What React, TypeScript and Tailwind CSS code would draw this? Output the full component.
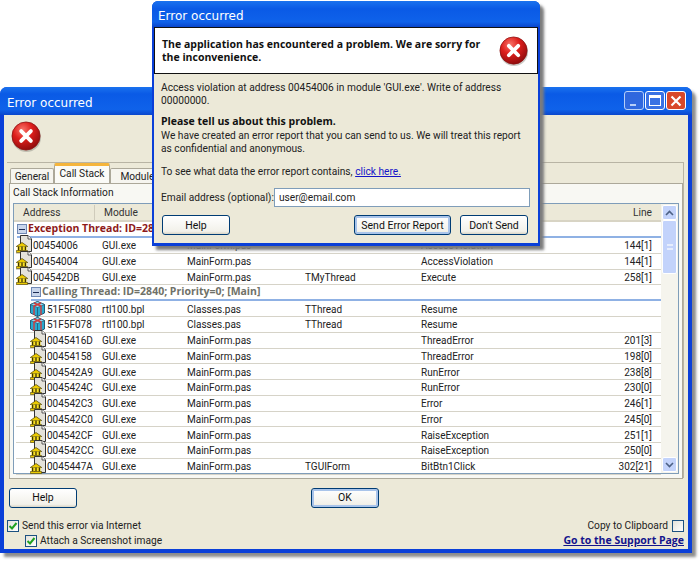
import React from "react";

const FONT = "font-['Roboto','Noto_Sans',sans-serif]";
const BOLD = "font-['Open_Sans',sans-serif] font-bold text-[10.5px]";
const TITLE = "text-[12px] text-white font-['DejaVu_Sans',sans-serif]";

function ErrorIcon({ className }: { className: string }) {
  return (
    <svg viewBox="0 0 32 32" className={className}>
      <defs>
        <radialGradient id="errRed" cx="38%" cy="28%" r="75%">
          <stop offset="0%" stopColor="#f8746a" />
          <stop offset="45%" stopColor="#de1f1c" />
          <stop offset="100%" stopColor="#8e0b0d" />
        </radialGradient>
      </defs>
      <circle cx="16" cy="17" r="15" fill="#8a8a80" opacity="0.45" />
      <circle cx="15.5" cy="15.5" r="14.5" fill="url(#errRed)" stroke="#8b1212" strokeWidth="0.8" />
      <path d="M10.5 10.5 L20.5 20.5 M20.5 10.5 L10.5 20.5" stroke="#fff" strokeWidth="4" strokeLinecap="round" />
    </svg>
  );
}

function UnitIcon() {
  return (
    <svg viewBox="0 0 17 18" className="w-[17px] h-[18px] shrink-0 -mt-[3px]">
      <path d="M4.5 .5 H12 L15.5 4 V16.5 H4.5 Z" fill="#e4e2da" stroke="#333" strokeWidth="1" />
      <path d="M12 .5 V4 H15.5" fill="#fff" stroke="#333" strokeWidth="0.8" />
      <path d="M.3 11.5 L6 7.5 L11.7 11.5 Z" fill="#eccb00" stroke="#4a3d00" strokeWidth="0.7" />
      <path d="M1.5 11.5 H10.5 V15.5 H1.5 Z" fill="#f8e020" />
      <path d="M2.6 11.5 V15.5 M6 11.5 V15.5 M9.4 11.5 V15.5" stroke="#3d3200" strokeWidth="1.3" />
      <path d="M.4 15.5 H11.6 V17.5 H.4 Z" fill="#eccb00" stroke="#4a3d00" strokeWidth="0.6" />
    </svg>
  );
}

function PackageIcon() {
  return (
    <svg viewBox="0 0 15 16" className="w-[15px] h-[16px] shrink-0">
      <path d="M7.5 .5 L14.5 3.5 V12 L7.5 15.5 L.5 12 V3.5 Z" fill="#27a9cf" stroke="#1b4e68" strokeWidth="0.9" />
      <path d="M.5 3.5 L7.5 6.5 L14.5 3.5 L7.5 .5 Z" fill="#8fdcf2" stroke="#1b4e68" strokeWidth="0.6" />
      <path d="M7.5 6.5 V15.5" stroke="#1b4e68" strokeWidth="0.7" />
      <path d="M4 2 L11 5 V14" fill="none" stroke="#d23a3a" strokeWidth="1.4" />
      <path d="M11 2 L4 5 V14" fill="none" stroke="#d23a3a" strokeWidth="1.4" />
    </svg>
  );
}

function XpButton({ label, className, focus }: { label: string; className: string; focus?: boolean }) {
  return (
    <div
      className={`${className} h-[20px] flex items-center justify-center rounded-[3px] border border-[#003c74] bg-[linear-gradient(#ffffff,#f2f1ea_85%,#d9d5c6)] text-[10.5px] text-[#111] ${focus ? "shadow-[inset_0_0_0_2px_#a9c4ea]" : ""}`}
    >
      {label}
    </div>
  );
}

function WinButton({ children, className }: { children: React.ReactNode; className: string }) {
  return (
    <div className={`w-[20px] h-[19px] rounded-[3px] border border-white flex items-center justify-center ${className}`}>
      {children}
    </div>
  );
}

function CheckBox({ checked }: { checked?: boolean }) {
  return (
    <div className="w-[12px] h-[12px] shrink-0 border border-[#1c5180] bg-[linear-gradient(135deg,#e4e2da,#ffffff)] flex items-center justify-center">
      {checked && (
        <svg viewBox="0 0 10 10" className="w-[10px] h-[10px]">
          <path d="M1.5 5 L4 7.5 L8.5 2" fill="none" stroke="#21a121" strokeWidth="2" />
        </svg>
      )}
    </div>
  );
}

type Row = { addr: string; mod: string; unit: string; cls: string; method: string; line: string; pkg?: boolean };

const exceptionRows: Row[] = [
  { addr: "00454006", mod: "GUI.exe", unit: "MainForm.pas", cls: "", method: "AccessViolation", line: "144[1]" },
  { addr: "00454004", mod: "GUI.exe", unit: "MainForm.pas", cls: "", method: "AccessViolation", line: "144[1]" },
  { addr: "004542DB", mod: "GUI.exe", unit: "MainForm.pas", cls: "TMyThread", method: "Execute", line: "258[1]" },
];

const callingRows: Row[] = [
  { addr: "51F5F080", mod: "rtl100.bpl", unit: "Classes.pas", cls: "TThread", method: "Resume", line: "", pkg: true },
  { addr: "51F5F078", mod: "rtl100.bpl", unit: "Classes.pas", cls: "TThread", method: "Resume", line: "", pkg: true },
  { addr: "0045416D", mod: "GUI.exe", unit: "MainForm.pas", cls: "", method: "ThreadError", line: "201[3]" },
  { addr: "00454158", mod: "GUI.exe", unit: "MainForm.pas", cls: "", method: "ThreadError", line: "198[0]" },
  { addr: "004542A9", mod: "GUI.exe", unit: "MainForm.pas", cls: "", method: "RunError", line: "238[8]" },
  { addr: "0045424C", mod: "GUI.exe", unit: "MainForm.pas", cls: "", method: "RunError", line: "230[0]" },
  { addr: "004542C3", mod: "GUI.exe", unit: "MainForm.pas", cls: "", method: "Error", line: "246[1]" },
  { addr: "004542C0", mod: "GUI.exe", unit: "MainForm.pas", cls: "", method: "Error", line: "245[0]" },
  { addr: "004542CF", mod: "GUI.exe", unit: "MainForm.pas", cls: "", method: "RaiseException", line: "251[1]" },
  { addr: "004542CC", mod: "GUI.exe", unit: "MainForm.pas", cls: "", method: "RaiseException", line: "250[0]" },
  { addr: "0045447A", mod: "GUI.exe", unit: "MainForm.pas", cls: "TGUIForm", method: "BitBtn1Click", line: "302[21]" },
];

function StackRow({ row, nested }: { row: Row; nested?: boolean }) {
  return (
    <div className="flex items-center h-[15.75px] pt-[1px] border-b border-[#d6d3c8] text-[10px] text-[#222] whitespace-nowrap">
      <div className={`flex items-center w-[86px] ${nested ? "pl-[14px]" : ""}`}>
        {row.pkg ? (
          <div className="flex items-center gap-[2px]">
            <PackageIcon />
            <span>{row.addr}</span>
          </div>
        ) : (
          <div className="flex items-center">
            <UnitIcon />
            <span>{row.addr}</span>
          </div>
        )}
      </div>
      <div className="w-[85px]">{row.mod}</div>
      <div className="w-[118px]">{row.unit}</div>
      <div className="w-[116px]">{row.cls}</div>
      <div className="flex-1">{row.method}</div>
      <div className="pr-[9px]">{row.line}</div>
    </div>
  );
}

function ThreadHeader({ label, color, nested }: { label: string; color: string; nested?: boolean }) {
  return (
    <div className={`flex items-center h-[16px] gap-[1px] border-b-2 border-[#8fb1e4] whitespace-nowrap ${nested ? "ml-[15px]" : "ml-[1px]"}`}>
      <div className="w-[10px] h-[10px] bg-[#c9d6ec] border border-[#6f88b4] flex items-center justify-center">
        <div className="w-[6px] h-[1px] bg-[#1c2c55]" />
      </div>
      <span className={`${BOLD} ${color}`}>{label}</span>
    </div>
  );
}

function CallStackList() {
  return (
    <div className="mx-[3px] h-[271px] border border-[#7f9db9] bg-white flex">
      <div className="flex-1 min-w-0 flex flex-col">
        <div className="h-[18px] flex items-center bg-[#ece9d8] text-[10.2px] text-[#333] border-b-2 border-[#d8d4c4] shrink-0 pt-[1px]">
          <div className="w-[81px] pl-[9px] border-r border-[#cfcbbb]">Address</div>
          <div className="w-[85px] pl-[9px]">Module</div>
          <div className="flex-1" />
          <div className="pr-[9px]">Line</div>
        </div>
        <div className="h-[8px]" />
        <div className="pl-[2px]">
          <ThreadHeader label="Exception Thread: ID=2840; Priority=0; [Main]" color="text-[#8e1a1a]" />
          {exceptionRows.map((r) => (
            <StackRow key={r.addr} row={r} />
          ))}
          <ThreadHeader label="Calling Thread: ID=2840; Priority=0; [Main]" color="text-[#6f7168]" nested />
          {callingRows.map((r) => (
            <StackRow key={r.addr} row={r} nested />
          ))}
        </div>
      </div>
      <div className="w-[17px] shrink-0 bg-[#f5f4ed] flex flex-col p-[1px]">
        <div className="h-[15px] rounded-[2px] bg-[#c3d3fb] border border-white flex items-center justify-center">
          <svg viewBox="0 0 9 6" className="w-[9px] h-[6px]">
            <path d="M1 5 L4.5 1.5 L8 5" fill="none" stroke="#4d6185" strokeWidth="1.6" />
          </svg>
        </div>
        <div className="h-[54px] rounded-[2px] bg-[#c3d3fb] border border-white flex items-center justify-center">
          <div className="w-[6px] h-[6px] border-y-2 border-[#e6edfd]" />
        </div>
        <div className="flex-1" />
        <div className="h-[15px] rounded-[2px] bg-[#c3d3fb] border border-white flex items-center justify-center">
          <svg viewBox="0 0 9 6" className="w-[9px] h-[6px]">
            <path d="M1 1 L4.5 4.5 L8 1" fill="none" stroke="#4d6185" strokeWidth="1.6" />
          </svg>
        </div>
      </div>
    </div>
  );
}

function MainWindow() {
  return (
    <div className="absolute left-0 top-[87px] w-[692px] h-[466px] rounded-t-[7px] bg-[#0a3fd8] shadow-[4px_4px_3px_#8c8c8c] flex flex-col">
      <div className="h-[28px] shrink-0 rounded-t-[7px] bg-[linear-gradient(#1a72ee,#0a5ae6_25%,#0f62ea_80%,#0a46cc)] flex items-center justify-between pl-[7px] pr-[6px]">
        <span className={`${TITLE} mt-[4px]`}>Error occurred</span>
        <div className="flex items-center gap-[1px] -mt-[1px]">
          <WinButton className="bg-[#3f6ddb] opacity-70">
            <div className="w-[6px] h-[2px] bg-white mt-[9px] mr-[3px]" />
          </WinButton>
          <WinButton className="bg-[#3a72e4]">
            <div className="w-[12px] h-[11px] border border-white border-t-[3px]" />
          </WinButton>
          <WinButton className="bg-[#d8482a]">
            <svg viewBox="0 0 12 12" className="w-[12px] h-[12px]">
              <path d="M1.5 1.5 L10.5 10.5 M10.5 1.5 L1.5 10.5" stroke="#fff" strokeWidth="2.2" />
            </svg>
          </WinButton>
        </div>
      </div>
      <div className="flex-1 mx-[4px] mb-[4px] bg-[#ece9d8] flex flex-col pt-[6px] pl-[3px] pr-[4px] min-h-0">
        <ErrorIcon className="w-[31px] h-[31px] ml-[4px] shrink-0" />
        <div className="mt-[10px] h-[316px] border-t border-r border-[#b8b4a4] relative shrink-0">
          <div className="flex items-end h-[20px] pl-[3px] text-[10.2px] text-[#222]">
            <div className="w-[44px] h-[15px] bg-[#f6f5ef] border border-[#aca899] border-b-0 rounded-t-[2px] text-center">General</div>
            <div className="w-[56px] h-[20px] bg-[#fbfbf7] border-x border-[#aca899] border-t-[3px] border-t-[#f5b53c] rounded-t-[2px] text-center">Call Stack</div>
            <div className="w-[60px] h-[15px] bg-[#f6f5ef] border border-[#aca899] border-b-0 rounded-t-[2px] text-center">Modules</div>
          </div>
          <div className="h-[296px] ml-[2px] border border-[#aca899] bg-[#f8f8f3]">
            <div className="text-[10.2px] text-[#222] leading-[13px] pt-[2px] pl-[3px] h-[19px]">Call Stack Information</div>
            <CallStackList />
          </div>
        </div>
        <div className="mt-[10px] flex items-center shrink-0 h-[20px]">
          <XpButton label="Help" className="w-[68px] ml-[2px]" />
          <XpButton label="OK" className="w-[68px] ml-[234px]" focus />
        </div>
        <div className="mt-[12px] flex justify-between shrink-0 text-[10.2px] text-[#222]">
          <div className="flex flex-col gap-[3px]">
            <div className="flex items-center gap-[3px] leading-[12px]">
              <CheckBox checked />
              <span>Send this error via Internet</span>
            </div>
            <div className="flex items-center gap-[3px] ml-[18px] leading-[12px]">
              <CheckBox checked />
              <span>Attach a Screenshot image</span>
            </div>
          </div>
          <div className="flex flex-col items-end gap-[2px] leading-[12px]">
            <div className="flex items-center gap-[4px]">
              <span>Copy to Clipboard</span>
              <CheckBox />
            </div>
            <a className={`${BOLD} text-[#14148c] underline`}>Go to the Support Page</a>
          </div>
        </div>
      </div>
    </div>
  );
}

function ReportDialog() {
  return (
    <div className="absolute left-[152px] top-[1px] w-[388px] h-[245px] rounded-t-[6px] bg-[#0a3fd8] shadow-[4px_4px_3px_#7c7c7c] flex flex-col">
      <div className="h-[26px] shrink-0 rounded-t-[6px] bg-[linear-gradient(#1a72ee,#0a5ae6_30%,#0f62ea_80%,#0a46cc)] flex items-center pl-[6px]">
        <span className={`${TITLE} mt-[3px]`}>Error occurred</span>
      </div>
      <div className="flex-1 mx-[2px] mb-[3px] bg-[#ece9d8] flex flex-col text-[10.2px] leading-[13px] text-[#222] min-h-0">
        <div className="h-[47px] shrink-0 bg-white border border-[#111] flex items-center justify-between pl-[7px] pr-[8px]">
          <p className={`w-[330px] text-[#111] leading-[12.5px] ${BOLD}`}>
            The application has encountered a problem. We are sorry for the inconvenience.
          </p>
          <ErrorIcon className="w-[30px] h-[30px] shrink-0" />
        </div>
        <div className="px-[7px] flex flex-col">
          <p className="mt-[7px] w-[345px]">Access violation at address 00454006 in module 'GUI.exe'. Write of address 00000000.</p>
          <p className={`mt-[8px] text-[#111] ${BOLD}`}>Please tell us about this problem.</p>
          <p className="mt-[1px]">We have created an error report that you can send to us. We will treat this report as confidential and anonymous.</p>
          <p className="mt-[10px]">
            To see what data the error report contains, <a className="text-[#1414c8] underline">click here.</a>
          </p>
          <div className="mt-[10px] flex items-center justify-between">
            <span className="whitespace-nowrap">Email address (optional):</span>
            <div className="w-[256px] shrink-0 h-[19px] mr-[2px] border border-[#7f9db9] bg-white pl-[4px] flex items-center">user@email.com</div>
          </div>
          <div className="mt-[8px] flex items-center">
            <XpButton label="Help" className="w-[68px] ml-[1px]" />
            <XpButton label="Send Error Report" className="w-[97px] ml-[124px]" focus />
            <XpButton label="Don't Send" className="w-[68px] ml-[9px]" />
          </div>
        </div>
      </div>
    </div>
  );
}

export default function App() {
  return (
    <div className={`relative w-[700px] h-[561px] bg-white overflow-hidden ${FONT}`}>
      <MainWindow />
      <ReportDialog />
    </div>
  );
}
